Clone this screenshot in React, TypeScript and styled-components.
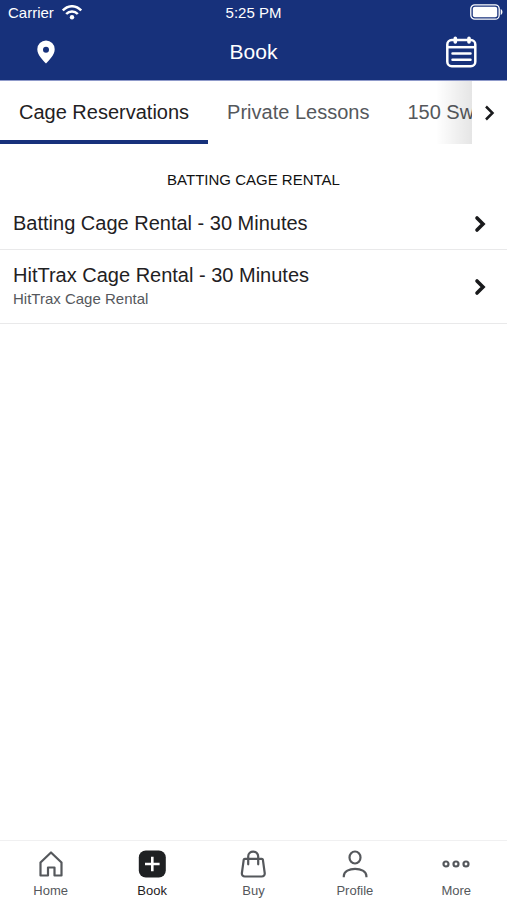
import React from "react";
import styled, { createGlobalStyle } from "styled-components";

const navy = "#17317b";
const ink = "#1f2123";
const muted = "#55585c";

const GlobalStyle = createGlobalStyle`
  *, *::before, *::after { box-sizing: border-box; }
  body { margin: 0; background: #fff; }
  button { font: inherit; color: inherit; background: none; border: 0; padding: 0; cursor: pointer; }
  svg { display: block; flex: none; }
`;

const Screen = styled.div`
  display: flex;
  flex-direction: column;
  min-height: 100vh;
  font-family: "Liberation Sans", Arial, sans-serif;
  color: ${ink};
  background: #fff;
`;

const Header = styled.header`
  background: ${navy};
  color: #fff;
  border-bottom: 1px solid #8f9aca;
`;

const StatusBar = styled.div`
  display: grid;
  grid-template-columns: 1fr auto 1fr;
  align-items: center;
  height: 24px;
  font-size: 15px;
`;

const Carrier = styled.div`
  display: flex;
  align-items: center;
  gap: 8px;
  padding-left: 8px;
`;

const Battery = styled.div`
  display: flex;
  justify-content: flex-end;
  padding-right: 4px;
`;

const TitleBar = styled.div`
  display: grid;
  grid-template-columns: 1fr auto 1fr;
  align-items: center;
  height: 56px;
  padding: 0 28px;
`;

const Title = styled.h1`
  margin: 0;
  font-size: 21px;
  line-height: 24px;
  font-weight: 400;
`;

const HeaderButton = styled.button<{ $end?: boolean }>`
  display: grid;
  place-items: center;
  width: 36px;
  height: 36px;
  justify-self: ${(p) => (p.$end ? "end" : "start")};
`;

const TabBar = styled.div`
  display: flex;
  height: 63px;
`;

const TabScroller = styled.div`
  position: relative;
  display: flex;
  flex: 1;
  min-width: 0;
  overflow: hidden;

  &::after {
    content: "";
    position: absolute;
    top: 0;
    right: 0;
    bottom: 0;
    width: 36px;
    background: linear-gradient(to right, rgba(0, 0, 0, 0), rgba(0, 0, 0, 0.1));
    pointer-events: none;
  }
`;

const Tab = styled.button<{ $active?: boolean }>`
  flex: none;
  padding: 3px 19px 0;
  font-size: 20px;
  line-height: 24px;
  white-space: nowrap;
  color: ${(p) => (p.$active ? ink : muted)};
  border-bottom: 4px solid ${(p) => (p.$active ? navy : "transparent")};
`;

const NextButton = styled.button`
  display: grid;
  place-items: center;
  width: 35px;
`;

const Main = styled.main`
  flex: 1;
`;

const SectionTitle = styled.h2`
  margin: 0;
  padding: 26px 16px 8px;
  font-size: 15px;
  line-height: 20px;
  font-weight: 400;
  text-align: center;
  color: #111;
`;

const List = styled.ul`
  list-style: none;
  margin: 0;
  padding: 0;
`;

const Row = styled.li`
  border-bottom: 1px solid #e9e9ea;
`;

const RowButton = styled.button`
  display: flex;
  align-items: center;
  justify-content: space-between;
  width: 100%;
  padding: 13px 20px 13px 13px;
  text-align: left;
`;

const RowName = styled.span`
  display: block;
  font-size: 20px;
  line-height: 25px;
`;

const RowNote = styled.span`
  display: block;
  font-size: 15px;
  line-height: 22px;
  color: ${muted};
`;

const BottomNav = styled.nav`
  display: grid;
  grid-template-columns: repeat(5, 1fr);
  height: 60px;
  border-top: 1px solid #f0f0f1;
`;

const NavItem = styled.button<{ $active?: boolean }>`
  display: flex;
  flex-direction: column;
  align-items: center;
  padding-top: 8px;
  gap: 4px;
  font-size: 13px;
  line-height: 16px;
  color: ${(p) => (p.$active ? ink : muted)};
`;

const Chevron = ({ width }: { width: number }) => (
  <svg width="14" height="18" viewBox="0 0 14 18" fill="none" stroke="#191a1c" strokeWidth={width}>
    <path
      d={width > 3 ? "M4 3l6 6-6 6" : "M3 2.500l6.500 6.500-6.500 6.500"}
      strokeLinecap={width > 3 ? "round" : "butt"}
    />
  </svg>
);

const WifiIcon = () => (
  <svg width="20" height="15" viewBox="0 0 20 15" fill="none" stroke="#fff" strokeWidth="2.5">
    <path d="M.8 5.5C6-.2 14-.2 19.200 5.500M4.200 9c3.300-3.500 8.300-3.500 11.600 0" />
    <circle cx="10" cy="12.300" r="2.200" fill="#fff" stroke="none" />
  </svg>
);

const BatteryIcon = () => (
  <svg width="33" height="16" viewBox="0 0 33 16" fill="none">
    <rect x=".8" y=".8" width="28.400" height="14.400" rx="4" stroke="#fff" strokeWidth="1.300" />
    <rect x="2.800" y="2.800" width="24.400" height="10.400" rx="2" fill="#fff" />
    <path d="M30.700 5c2.300.8 2.300 5.200 0 6z" fill="#fff" />
  </svg>
);

const PinIcon = () => (
  <svg width="18" height="24" viewBox="0 0 18 24">
    <path
      fill="#fff"
      fillRule="evenodd"
      d="M9 .5A8.700 8.700 0 0 0 .3 9.200C.3 15 6 20 9 23.500 12 20 17.700 15 17.700 9.200A8.700 8.700 0 0 0 9 .5zm0 6.300a3 3 0 1 1 0 6 3 3 0 0 1 0-6z"
    />
  </svg>
);

const CalendarIcon = () => (
  <svg width="32" height="32" viewBox="0 0 32 32" fill="none" stroke="#fff" strokeWidth="2.500">
    <rect x="2.300" y="4" width="28" height="26.300" rx="4.500" />
    <path d="M2.300 11.200h28" />
    <path d="M10.300 2.200v3.800M24 2.200v3.800" strokeWidth="3.600" strokeLinecap="round" />
    <path d="M7.500 17.500h18M7.500 23.700h18" strokeLinecap="round" />
  </svg>
);

const navIcon = {
  width: 28,
  height: 30,
  viewBox: "0 0 28 30",
  fill: "none",
  stroke: "currentColor",
  strokeWidth: 2.2,
};

const HomeIcon = () => (
  <svg {...navIcon}>
    <path d="M3.500 13.500L14 3.500l10.500 10V26.500h-7V18.500h-6.500V26.500H3.500z" strokeLinejoin="round" />
  </svg>
);

const BookIcon = () => (
  <svg {...navIcon}>
    <rect x=".8" y="1.500" width="27" height="27" rx="7" fill="currentColor" stroke="none" />
    <path d="M14.300 7.800v14.400M7 15h14.600" stroke="#fff" strokeWidth="2.600" />
  </svg>
);

const BagIcon = () => (
  <svg {...navIcon}>
    <path d="M5.800 9.800h17c.6 0 1 .4 1.100 1l1.800 13.200c.3 2-1 3.500-3 3.500H5.900c-2 0-3.300-1.500-3-3.500l1.800-13.200c.1-.6.500-1 1.100-1z" strokeLinejoin="round" />
    <path d="M9.200 15.300V7.500c0-6.500 10-6.500 10 0v7.800" strokeLinecap="round" />
  </svg>
);

const ProfileIcon = () => (
  <svg {...navIcon}>
    <ellipse cx="14" cy="8.500" rx="5.500" ry="6" />
    <path d="M2.800 28.300v-1.300c0-9.500 22.600-9.500 22.600 0v1.300" />
  </svg>
);

const MoreIcon = () => (
  <svg {...navIcon}>
    <circle cx="4" cy="15" r="2.500" />
    <circle cx="14" cy="15" r="2.500" />
    <circle cx="24" cy="15" r="2.500" />
  </svg>
);

const tabs = ["Cage Reservations", "Private Lessons", "150 Swings"];

const services = [
  { name: "Batting Cage Rental - 30 Minutes", note: "" },
  { name: "HitTrax Cage Rental - 30 Minutes", note: "HitTrax Cage Rental" },
];

const navItems = [
  { label: "Home", Icon: HomeIcon },
  { label: "Book", Icon: BookIcon },
  { label: "Buy", Icon: BagIcon },
  { label: "Profile", Icon: ProfileIcon },
  { label: "More", Icon: MoreIcon },
];

export default function App() {
  return (
    <Screen>
      <GlobalStyle />
      <Header>
        <StatusBar>
          <Carrier>
            Carrier
            <WifiIcon />
          </Carrier>
          <span>5:25 PM</span>
          <Battery>
            <BatteryIcon />
          </Battery>
        </StatusBar>
        <TitleBar>
          <HeaderButton aria-label="Locations">
            <PinIcon />
          </HeaderButton>
          <Title>Book</Title>
          <HeaderButton $end aria-label="Schedule">
            <CalendarIcon />
          </HeaderButton>
        </TitleBar>
      </Header>
      <TabBar>
        <TabScroller role="tablist">
          {tabs.map((label, i) => (
            <Tab key={label} role="tab" aria-selected={i === 0} $active={i === 0}>
              {label}
            </Tab>
          ))}
        </TabScroller>
        <NextButton aria-label="More tabs">
          <Chevron width={2.5} />
        </NextButton>
      </TabBar>
      <Main>
        <SectionTitle>BATTING CAGE RENTAL</SectionTitle>
        <List>
          {services.map(({ name, note }) => (
            <Row key={name}>
              <RowButton>
                <span>
                  <RowName>{name}</RowName>
                  {note && <RowNote>{note}</RowNote>}
                </span>
                <Chevron width={3.6} />
              </RowButton>
            </Row>
          ))}
        </List>
      </Main>
      <BottomNav>
        {navItems.map(({ label, Icon }) => (
          <NavItem key={label} $active={label === "Book"} aria-current={label === "Book" ? "page" : undefined}>
            <Icon />
            {label}
          </NavItem>
        ))}
      </BottomNav>
    </Screen>
  );
}
